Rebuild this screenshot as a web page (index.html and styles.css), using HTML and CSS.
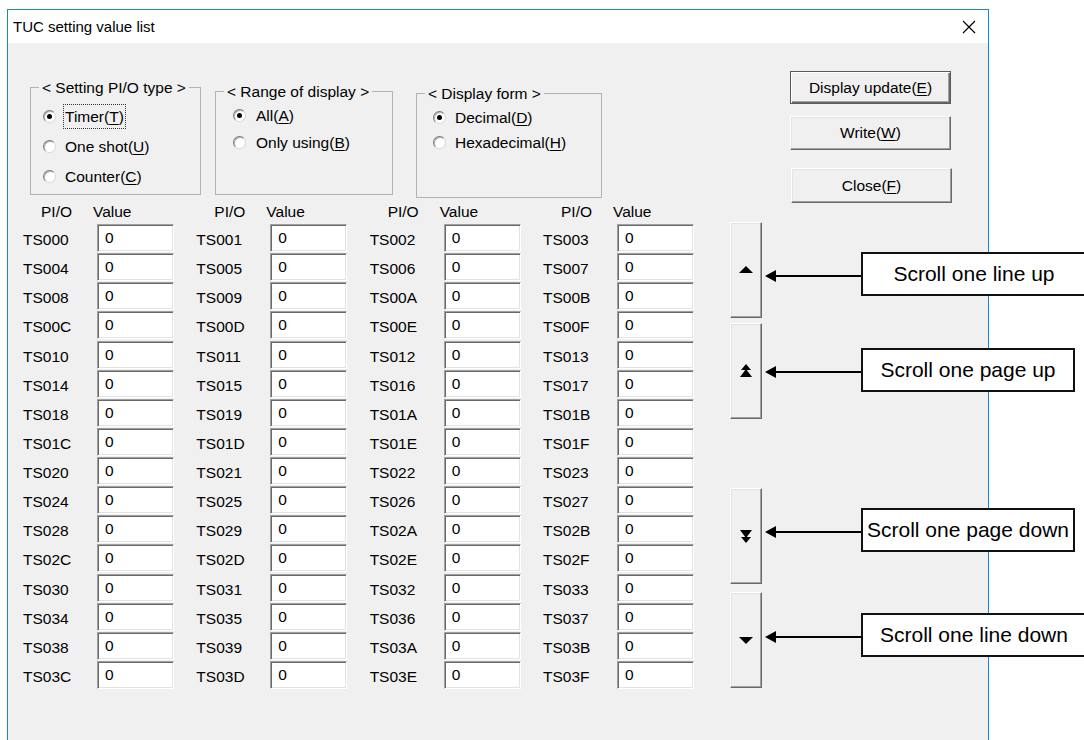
FILE: index.html
```html
<!DOCTYPE html>
<html lang="en">
<head>
  <meta charset="UTF-8" />
  <title>TUC setting value list</title>
  <link rel="stylesheet" href="styles.css">
</head>
<body>
  <div class="window">
    <div class="titlebar">
      <span class="title">TUC setting value list</span>
      <svg class="close" width="14" height="14" viewBox="0 0 14 14">
        <path d="M1 1 L13 13 M13 1 L1 13" stroke="#000" stroke-width="1.2" fill="none" />
      </svg>
    </div>

    <div class="content">
      <div class="top">
        <fieldset class="group g-type">
          <legend>&lt; Setting PI/O type &gt;</legend>
          <div class="opts">
            <label class="opt"><span class="radio on"></span><span class="focus">Timer(<u>T</u>)</span></label>
            <label class="opt"><span class="radio"></span>One shot(<u>U</u>)</label>
            <label class="opt"><span class="radio"></span>Counter(<u>C</u>)</label>
          </div>
        </fieldset>

        <fieldset class="group g-range">
          <legend>&lt; Range of display &gt;</legend>
          <div class="opts">
            <label class="opt"><span class="radio on"></span>All(<u>A</u>)</label>
            <label class="opt"><span class="radio"></span>Only using(<u>B</u>)</label>
          </div>
        </fieldset>

        <fieldset class="group g-form">
          <legend>&lt; Display form &gt;</legend>
          <div class="opts">
            <label class="opt"><span class="radio on"></span>Decimal(<u>D</u>)</label>
            <label class="opt"><span class="radio"></span>Hexadecimal(<u>H</u>)</label>
          </div>
        </fieldset>

        <div class="actions">
          <button class="btn default">Display update(<u>E</u>)</button>
          <button class="btn btn-write">Write(<u>W</u>)</button>
          <button class="btn btn-close">Close(<u>F</u>)</button>
        </div>
      </div>

      <div class="lower">
        <div class="grid">
          <div class="cell head"><span class="h-pio">PI/O</span><span>Value</span></div>
          <div class="cell head"><span class="h-pio">PI/O</span><span>Value</span></div>
          <div class="cell head"><span class="h-pio">PI/O</span><span>Value</span></div>
          <div class="cell head"><span class="h-pio">PI/O</span><span>Value</span></div>

          <div class="cell"><span class="pio">TS000</span><input class="val" type="text" value="0"></div>
          <div class="cell"><span class="pio">TS001</span><input class="val" type="text" value="0"></div>
          <div class="cell"><span class="pio">TS002</span><input class="val" type="text" value="0"></div>
          <div class="cell"><span class="pio">TS003</span><input class="val" type="text" value="0"></div>
          <div class="cell"><span class="pio">TS004</span><input class="val" type="text" value="0"></div>
          <div class="cell"><span class="pio">TS005</span><input class="val" type="text" value="0"></div>
          <div class="cell"><span class="pio">TS006</span><input class="val" type="text" value="0"></div>
          <div class="cell"><span class="pio">TS007</span><input class="val" type="text" value="0"></div>
          <div class="cell"><span class="pio">TS008</span><input class="val" type="text" value="0"></div>
          <div class="cell"><span class="pio">TS009</span><input class="val" type="text" value="0"></div>
          <div class="cell"><span class="pio">TS00A</span><input class="val" type="text" value="0"></div>
          <div class="cell"><span class="pio">TS00B</span><input class="val" type="text" value="0"></div>
          <div class="cell"><span class="pio">TS00C</span><input class="val" type="text" value="0"></div>
          <div class="cell"><span class="pio">TS00D</span><input class="val" type="text" value="0"></div>
          <div class="cell"><span class="pio">TS00E</span><input class="val" type="text" value="0"></div>
          <div class="cell"><span class="pio">TS00F</span><input class="val" type="text" value="0"></div>
          <div class="cell"><span class="pio">TS010</span><input class="val" type="text" value="0"></div>
          <div class="cell"><span class="pio">TS011</span><input class="val" type="text" value="0"></div>
          <div class="cell"><span class="pio">TS012</span><input class="val" type="text" value="0"></div>
          <div class="cell"><span class="pio">TS013</span><input class="val" type="text" value="0"></div>
          <div class="cell"><span class="pio">TS014</span><input class="val" type="text" value="0"></div>
          <div class="cell"><span class="pio">TS015</span><input class="val" type="text" value="0"></div>
          <div class="cell"><span class="pio">TS016</span><input class="val" type="text" value="0"></div>
          <div class="cell"><span class="pio">TS017</span><input class="val" type="text" value="0"></div>
          <div class="cell"><span class="pio">TS018</span><input class="val" type="text" value="0"></div>
          <div class="cell"><span class="pio">TS019</span><input class="val" type="text" value="0"></div>
          <div class="cell"><span class="pio">TS01A</span><input class="val" type="text" value="0"></div>
          <div class="cell"><span class="pio">TS01B</span><input class="val" type="text" value="0"></div>
          <div class="cell"><span class="pio">TS01C</span><input class="val" type="text" value="0"></div>
          <div class="cell"><span class="pio">TS01D</span><input class="val" type="text" value="0"></div>
          <div class="cell"><span class="pio">TS01E</span><input class="val" type="text" value="0"></div>
          <div class="cell"><span class="pio">TS01F</span><input class="val" type="text" value="0"></div>
          <div class="cell"><span class="pio">TS020</span><input class="val" type="text" value="0"></div>
          <div class="cell"><span class="pio">TS021</span><input class="val" type="text" value="0"></div>
          <div class="cell"><span class="pio">TS022</span><input class="val" type="text" value="0"></div>
          <div class="cell"><span class="pio">TS023</span><input class="val" type="text" value="0"></div>
          <div class="cell"><span class="pio">TS024</span><input class="val" type="text" value="0"></div>
          <div class="cell"><span class="pio">TS025</span><input class="val" type="text" value="0"></div>
          <div class="cell"><span class="pio">TS026</span><input class="val" type="text" value="0"></div>
          <div class="cell"><span class="pio">TS027</span><input class="val" type="text" value="0"></div>
          <div class="cell"><span class="pio">TS028</span><input class="val" type="text" value="0"></div>
          <div class="cell"><span class="pio">TS029</span><input class="val" type="text" value="0"></div>
          <div class="cell"><span class="pio">TS02A</span><input class="val" type="text" value="0"></div>
          <div class="cell"><span class="pio">TS02B</span><input class="val" type="text" value="0"></div>
          <div class="cell"><span class="pio">TS02C</span><input class="val" type="text" value="0"></div>
          <div class="cell"><span class="pio">TS02D</span><input class="val" type="text" value="0"></div>
          <div class="cell"><span class="pio">TS02E</span><input class="val" type="text" value="0"></div>
          <div class="cell"><span class="pio">TS02F</span><input class="val" type="text" value="0"></div>
          <div class="cell"><span class="pio">TS030</span><input class="val" type="text" value="0"></div>
          <div class="cell"><span class="pio">TS031</span><input class="val" type="text" value="0"></div>
          <div class="cell"><span class="pio">TS032</span><input class="val" type="text" value="0"></div>
          <div class="cell"><span class="pio">TS033</span><input class="val" type="text" value="0"></div>
          <div class="cell"><span class="pio">TS034</span><input class="val" type="text" value="0"></div>
          <div class="cell"><span class="pio">TS035</span><input class="val" type="text" value="0"></div>
          <div class="cell"><span class="pio">TS036</span><input class="val" type="text" value="0"></div>
          <div class="cell"><span class="pio">TS037</span><input class="val" type="text" value="0"></div>
          <div class="cell"><span class="pio">TS038</span><input class="val" type="text" value="0"></div>
          <div class="cell"><span class="pio">TS039</span><input class="val" type="text" value="0"></div>
          <div class="cell"><span class="pio">TS03A</span><input class="val" type="text" value="0"></div>
          <div class="cell"><span class="pio">TS03B</span><input class="val" type="text" value="0"></div>
          <div class="cell"><span class="pio">TS03C</span><input class="val" type="text" value="0"></div>
          <div class="cell"><span class="pio">TS03D</span><input class="val" type="text" value="0"></div>
          <div class="cell"><span class="pio">TS03E</span><input class="val" type="text" value="0"></div>
          <div class="cell"><span class="pio">TS03F</span><input class="val" type="text" value="0"></div>
        </div>

        <div class="scroller">
          <button class="sbtn">
            <svg width="16" height="16" viewBox="0 0 16 16"><polygon points="1,11 15,11 8,4" /></svg>
          </button>
          <button class="sbtn s-pgup">
            <svg width="16" height="16" viewBox="0 0 16 16"><polygon points="8,1 13,7 3,7" /><polygon points="8,6 14,14 2,14" /></svg>
          </button>
          <button class="sbtn s-pgdn">
            <svg width="16" height="16" viewBox="0 0 16 16"><polygon points="2,2 14,2 8,10" /><polygon points="3,9 13,9 8,15" /></svg>
          </button>
          <button class="sbtn s-dn">
            <svg width="16" height="16" viewBox="0 0 16 16"><polygon points="1,5 15,5 8,12" /></svg>
          </button>
        </div>
      </div>
    </div>
  </div>

  <!-- callouts -->
  <div class="callout c1">
    <svg class="arrow" width="96" height="14" viewBox="0 0 96 14"><polygon points="0,7 11,1 11,13" /><line x1="10" y1="7" x2="96" y2="7" stroke="#000" stroke-width="2" /></svg>
    <div class="note wide">Scroll one line up</div>
  </div>
  <div class="callout c2">
    <svg class="arrow" width="96" height="14" viewBox="0 0 96 14"><polygon points="0,7 11,1 11,13" /><line x1="10" y1="7" x2="96" y2="7" stroke="#000" stroke-width="2" /></svg>
    <div class="note">Scroll one page up</div>
  </div>
  <div class="callout c3">
    <svg class="arrow" width="96" height="14" viewBox="0 0 96 14"><polygon points="0,7 11,1 11,13" /><line x1="10" y1="7" x2="96" y2="7" stroke="#000" stroke-width="2" /></svg>
    <div class="note">Scroll one page down</div>
  </div>
  <div class="callout c4">
    <svg class="arrow" width="96" height="14" viewBox="0 0 96 14"><polygon points="0,7 11,1 11,13" /><line x1="10" y1="7" x2="96" y2="7" stroke="#000" stroke-width="2" /></svg>
    <div class="note wide">Scroll one line down</div>
  </div>
</body>
</html>
```

FILE: styles.css
```css
html, body {
  overflow: hidden;
}

body {
  margin: 0;
  width: 1084px;
  height: 740px;
  position: relative;
  background: #ffffff;
  font-family: "Liberation Sans", Arial, sans-serif;
  font-size: 15.5px;
  color: #000;
}

u {
  text-decoration: underline;
  text-underline-offset: 2px;
}

.window {
  margin: 9px 0 0 7px;
  width: 982px;
  height: 731px;
  box-sizing: border-box;
  border: 1px solid #1c84d8;
  border-bottom: none;
  background: #f0f0f0;
  display: flex;
  flex-direction: column;
}

.titlebar {
  height: 33px;
  flex-shrink: 0;
  background: #ffffff;
  display: flex;
  align-items: center;
  justify-content: space-between;
  padding: 0 12px 0 5px;
}

.title {
  font-size: 15px;
  line-height: 17px;
}

/* top area: group boxes + buttons */
.top {
  display: flex;
  align-items: flex-start;
  height: 160px;
  padding-left: 22px;
}

.group {
  box-sizing: border-box;
  margin: 0;
  padding: 0 8px;
  min-width: 0;
  border: 1px solid #b2b2b2;
}

.group legend {
  padding: 0 3px;
  line-height: 17px;
}

.g-type {
  width: 171px;
  height: 116px;
  margin-top: 36px;
}

.g-range {
  width: 178px;
  height: 112px;
  margin-top: 40px;
  margin-left: 14px;
}

.g-form {
  width: 186px;
  height: 113px;
  margin-top: 42px;
  margin-left: 23px;
}

.opts {
  display: flex;
  flex-direction: column;
}

.g-type .opts {
  padding-top: 12px;
  gap: 13px;
}

.g-range .opts {
  padding-top: 7px;
  gap: 10px;
}

.g-form .opts {
  padding-top: 7px;
  gap: 8px;
}

.opt {
  display: flex;
  align-items: center;
  height: 17px;
  line-height: 17px;
  white-space: nowrap;
}

.radio {
  width: 13px;
  height: 13px;
  box-sizing: border-box;
  border-radius: 50%;
  border: 1px solid;
  border-color: #7a7a7a #d8d8d8 #d8d8d8 #7a7a7a;
  box-shadow: inset 1px 1px #b4b4b4;
  background: #ffffff;
  display: flex;
  align-items: center;
  justify-content: center;
  margin-right: 9px;
  flex-shrink: 0;
}

.radio.on::after {
  content: "";
  width: 5px;
  height: 5px;
  border-radius: 50%;
  background: #000;
}

.g-type .radio { margin-left: 4px; }
.g-range .radio { margin-left: 9px; margin-right: 10px; }
.g-form .radio { margin-left: 8px; }

.focus {
  padding: 3px 1px;
  margin: 0 -1px;
  outline: 1px dotted #333;
}

.actions {
  display: flex;
  flex-direction: column;
  margin-top: 28px;
  margin-left: 188px;
}

.btn {
  width: 161px;
  height: 33px;
  padding: 0;
  font-family: inherit;
  font-size: 15.5px;
  color: #000;
  background: #f0f0f0;
  border: 1px solid;
  border-color: #ffffff #696969 #696969 #ffffff;
  box-shadow: inset -1px -1px #a0a0a0, inset 1px 1px #e3e3e3;
}

.btn.default {
  border-color: #5a5a5a;
  box-shadow: inset 1px 1px #ffffff, inset -1px -1px #696969, inset -2px -2px #a0a0a0;
}

.btn-write {
  margin-top: 12px;
  height: 34px;
}

.btn-close {
  margin-top: 18px;
  margin-left: 1px;
  height: 35px;
}

/* value grid */
.lower {
  display: flex;
  padding-left: 15px;
}

.grid {
  display: grid;
  grid-template-columns: repeat(4, 151px);
  column-gap: 22.33px;
  grid-template-rows: 21px;
  grid-auto-rows: 29.13px;
}

.cell {
  display: flex;
  align-items: flex-start;
}

.head {
  line-height: 17px;
}

.h-pio {
  width: 70px;
  box-sizing: border-box;
  padding-left: 18px;
}

.pio {
  width: 74px;
  line-height: 17px;
  padding-top: 7px;
}

.val {
  width: 77px;
  height: 28px;
  box-sizing: border-box;
  margin: 0;
  padding: 0 0 0 7px;
  font-family: inherit;
  font-size: 15.5px;
  color: #000;
  background: #ffffff;
  border: 1px solid;
  border-color: #a0a0a0 #ffffff #ffffff #a0a0a0;
  box-shadow: inset 1px 1px #696969, inset -1px -1px #e3e3e3;
  outline: none;
}

.scroller {
  display: flex;
  flex-direction: column;
  margin-left: 36px;
  padding-top: 19px;
}

.sbtn {
  width: 32px;
  height: 96px;
  padding: 0;
  display: flex;
  align-items: center;
  justify-content: center;
  background: #f0f0f0;
  border: 1px solid;
  border-color: #ffffff #696969 #696969 #ffffff;
  box-shadow: inset -1px -1px #a0a0a0, inset 1px 1px #e3e3e3;
}

.sbtn svg {
  fill: #000;
}

.s-pgup { margin-top: 5px; }
.s-pgdn { margin-top: 69px; }
.s-dn { margin-top: 8px; }

/* callouts laid over the screenshot */
.callout {
  position: absolute;
  left: 765px;
  display: flex;
  align-items: center;
}

.c1 { top: 252px; }
.c2 { top: 348px; }
.c3 { top: 508px; }
.c4 { top: 613px; }

.arrow {
  margin-top: 4px;
  flex-shrink: 0;
}

.note {
  width: 214px;
  height: 44px;
  box-sizing: border-box;
  border: 2px solid #111;
  background: #ffffff;
  display: flex;
  align-items: center;
  justify-content: center;
  font-size: 21px;
  color: #000;
  white-space: nowrap;
}

.note.wide {
  width: 226px;
}
```
